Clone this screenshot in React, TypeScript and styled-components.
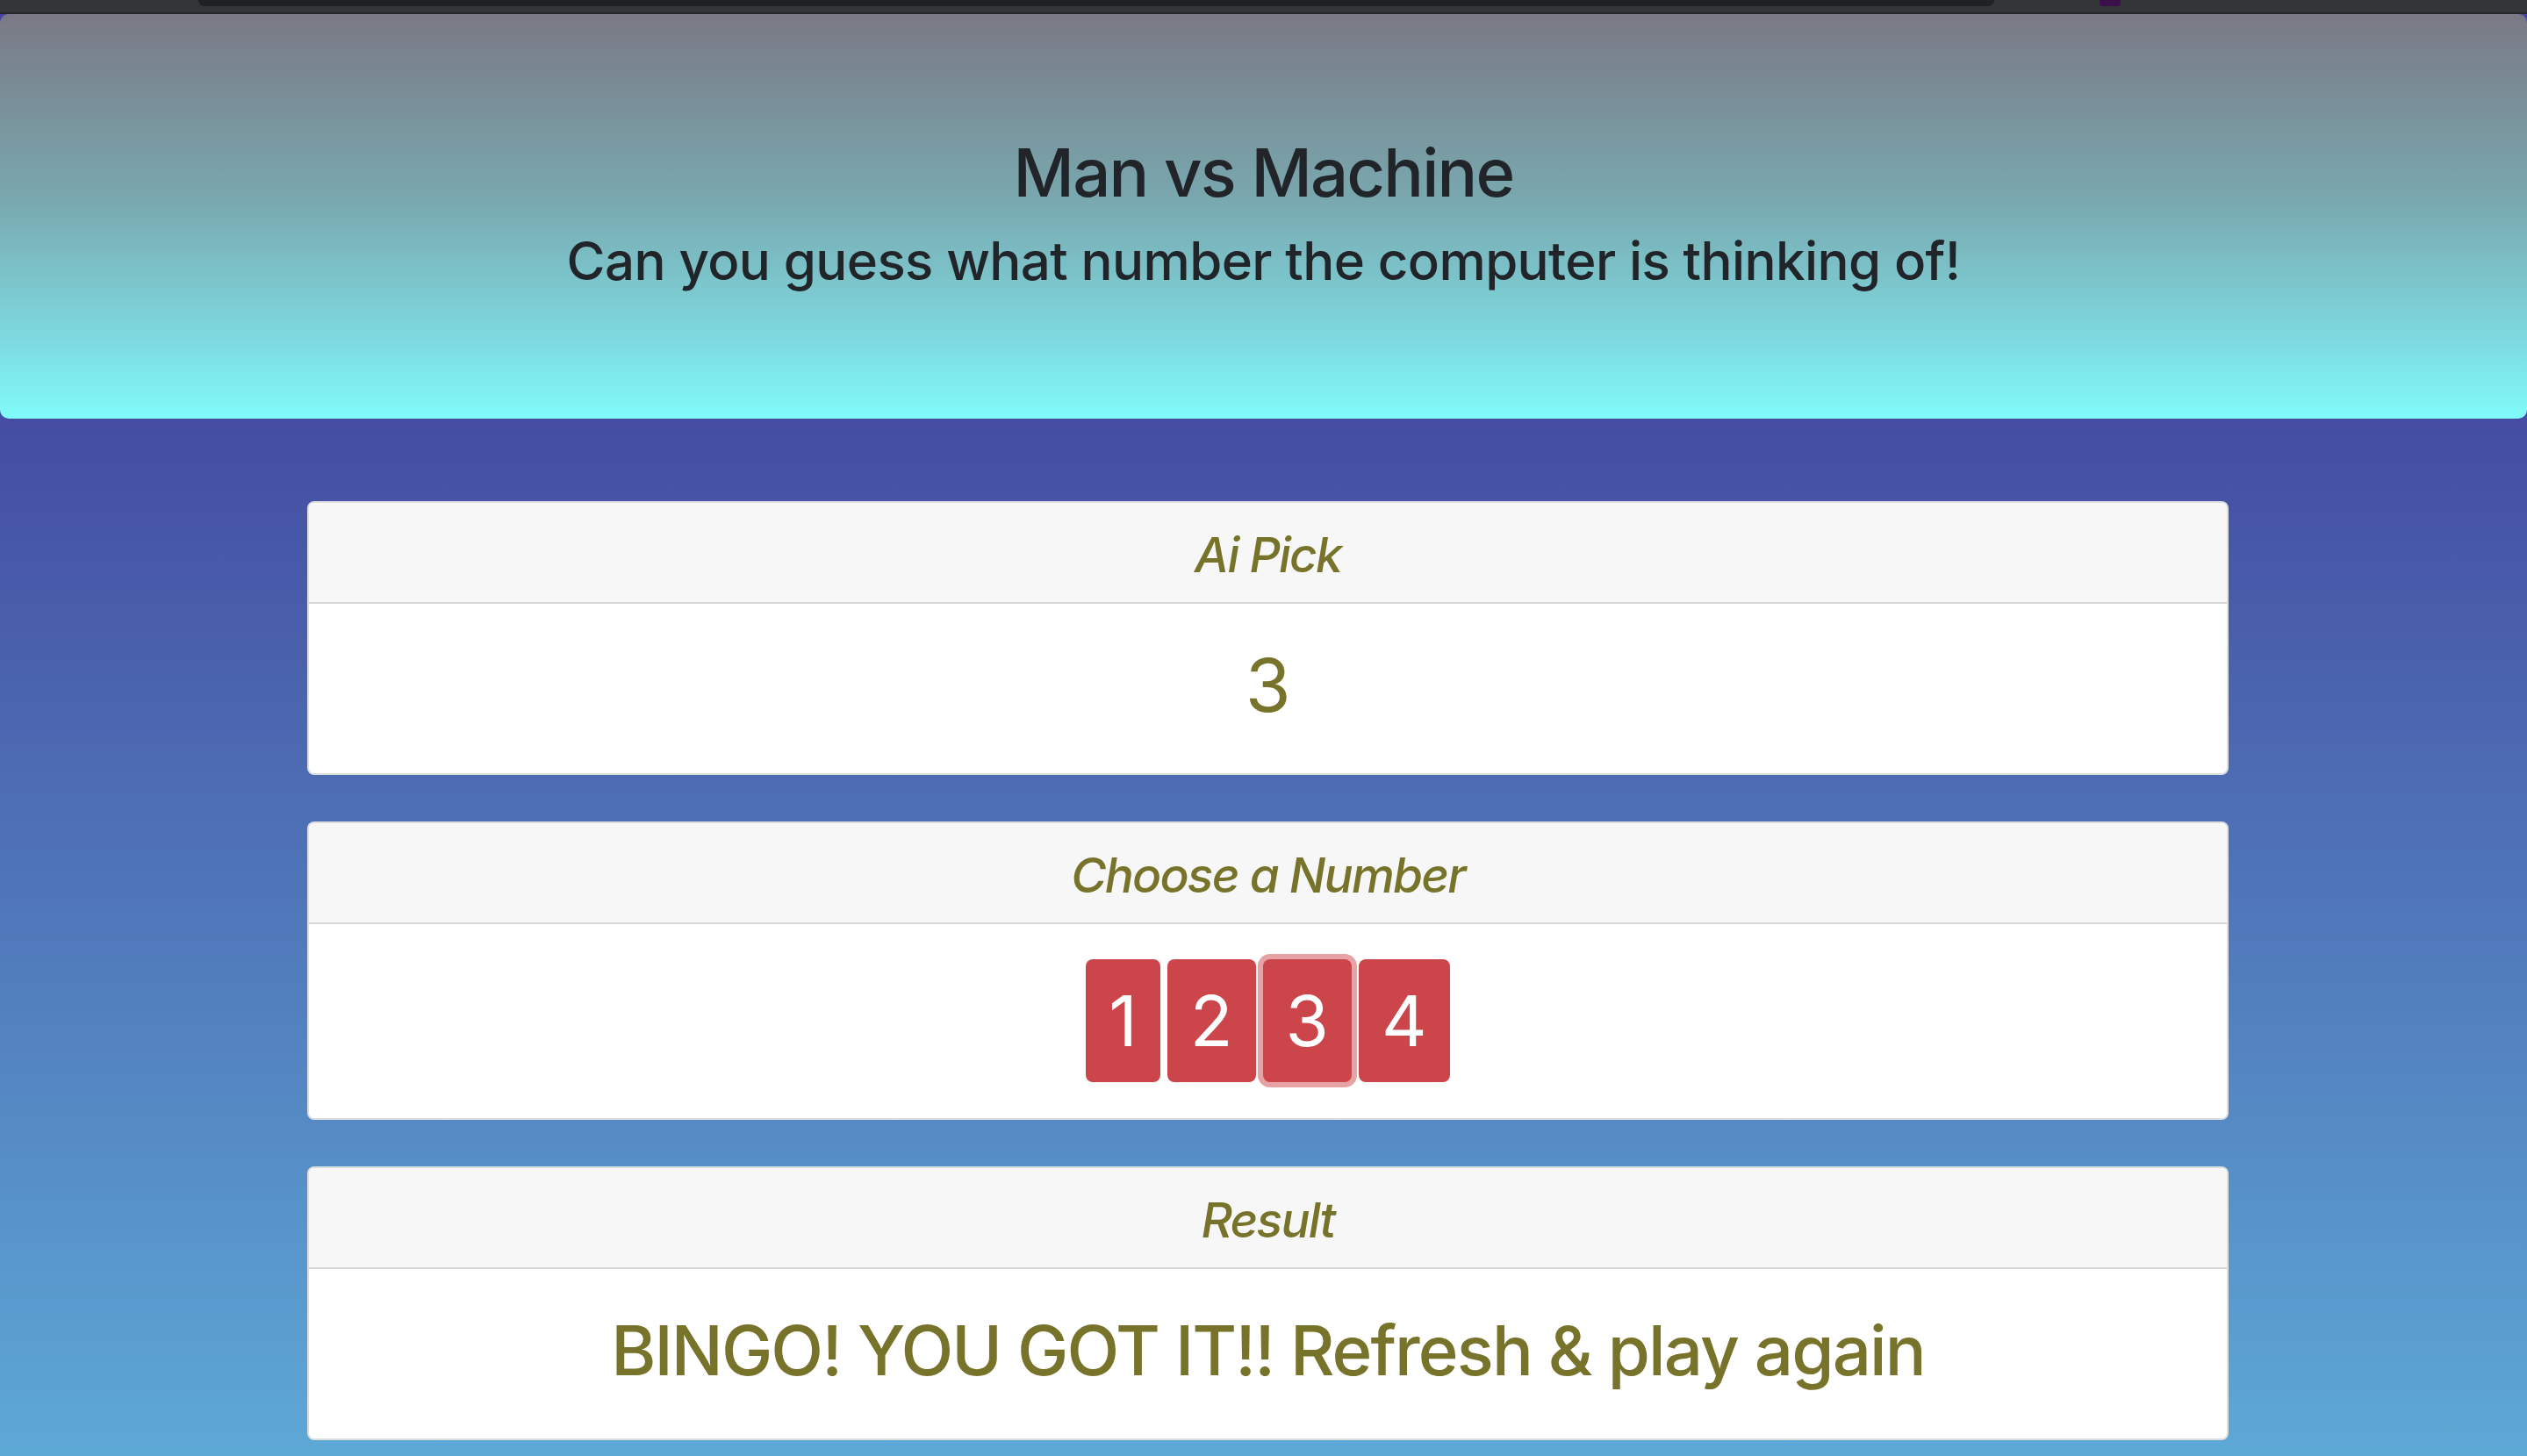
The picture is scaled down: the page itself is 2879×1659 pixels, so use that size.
import React from "react";
import styled, { createGlobalStyle } from "styled-components";

const GlobalStyle = createGlobalStyle`
  html, body {
    margin: 0;
    padding: 0;
  }
  body {
    min-height: 100vh;
    background: linear-gradient(180deg, #4a42a0 0px, #444da2 480px, #4f74b8 1000px, #5da9d6 1659px);
    background-attachment: fixed;
    font-family: Inter, "Noto Sans", "Liberation Sans", sans-serif;
    color: #212529;
  }
`;

const ChromeStrip = styled.div`
  height: 14px;
  background: #343539;
  border-bottom: 2px solid #26272a;
  display: flex;
  align-items: flex-start;
  padding-left: 226px;
  gap: 120px;
`;

const ChromeTab = styled.div`
  width: 2046px;
  height: 7px;
  background: #202124;
  border-radius: 0 0 10px 10px;
`;

const ChromeIcon = styled.div`
  width: 24px;
  height: 7px;
  background: #3a0f4a;
  border-radius: 0 0 3px 3px;
`;

const Jumbotron = styled.header`
  box-sizing: border-box;
  height: 461px;
  padding: 132px 32px 0;
  border-radius: 10px;
  background: linear-gradient(180deg, #7a7985 0%, #79a7ae 45%, #7dd9df 80%, #80fbfb 100%);
  text-align: center;
`;

const Title = styled.h1`
  margin: 0 0 17px;
  font-size: 76px;
  font-weight: 500;
  line-height: 96px;
  letter-spacing: -1.8px;
`;

const Lead = styled.p`
  margin: 0;
  font-size: 60px;
  font-weight: 500;
  line-height: 72px;
  letter-spacing: -0.6px;
`;

const CardStack = styled.main`
  width: 2189px;
  margin: 94px 0 0 350px;
  display: flex;
  flex-direction: column;
  gap: 53px;
`;

const Card = styled.section`
  background: #fff;
  border: 2px solid rgba(0, 0, 0, 0.13);
  border-radius: 8px;
  overflow: hidden;
`;

const CardHeader = styled.div`
  background: #f7f7f7;
  border-bottom: 2px solid rgba(0, 0, 0, 0.13);
  padding: 26px 40px 20px;
  text-align: center;
  font-size: 55px;
  font-style: italic;
  font-weight: 500;
  line-height: 67px;
  color: #77732b;
  letter-spacing: -1.8px;
`;

const CardBody = styled.div<{ $size?: number; $weight?: number; $spacing?: number }>`
  padding: 37px 40px 45px;
  text-align: center;
  font-size: ${(p) => p.$size ?? 84}px;
  font-weight: ${(p) => p.$weight ?? 400};
  line-height: 111px;
  color: #77732b;
  letter-spacing: ${(p) => p.$spacing ?? -0.5}px;
`;

const ButtonBody = styled.div`
  padding: 40px 40px 41px;
`;

const ButtonRow = styled.div`
  display: flex;
  justify-content: center;
  gap: 8px;
`;

const NumberButton = styled.button<{ $active?: boolean }>`
  font-family: inherit;
  font-size: 80px;
  font-weight: 400;
  line-height: 140px;
  height: 140px;
  padding: 0 26px;
  border: none;
  border-radius: 8px;
  background: #cb454b;
  color: #fff;
  cursor: pointer;
  box-shadow: ${(p) => (p.$active ? "0 0 0 6px #e6a2a5" : "none")};
`;

export default function App() {
  const numbers = [1, 2, 3, 4];
  return (
    <>
      <GlobalStyle />
      <ChromeStrip>
        <ChromeTab />
        <ChromeIcon />
      </ChromeStrip>
      <Jumbotron>
        <Title>Man vs Machine</Title>
        <Lead>Can you guess what number the computer is thinking of!</Lead>
      </Jumbotron>
      <CardStack>
        <Card>
          <CardHeader>Ai Pick</CardHeader>
          <CardBody>3</CardBody>
        </Card>
        <Card>
          <CardHeader>Choose a Number</CardHeader>
          <ButtonBody>
            <ButtonRow>
              {numbers.map((n) => (
                <NumberButton key={n} $active={n === 3}>
                  {n}
                </NumberButton>
              ))}
            </ButtonRow>
          </ButtonBody>
        </Card>
        <Card>
          <CardHeader>Result</CardHeader>
          <CardBody $size={78} $weight={500} $spacing={-1.9}>
            BINGO! YOU GOT IT!! Refresh &amp; play again
          </CardBody>
        </Card>
      </CardStack>
    </>
  );
}
